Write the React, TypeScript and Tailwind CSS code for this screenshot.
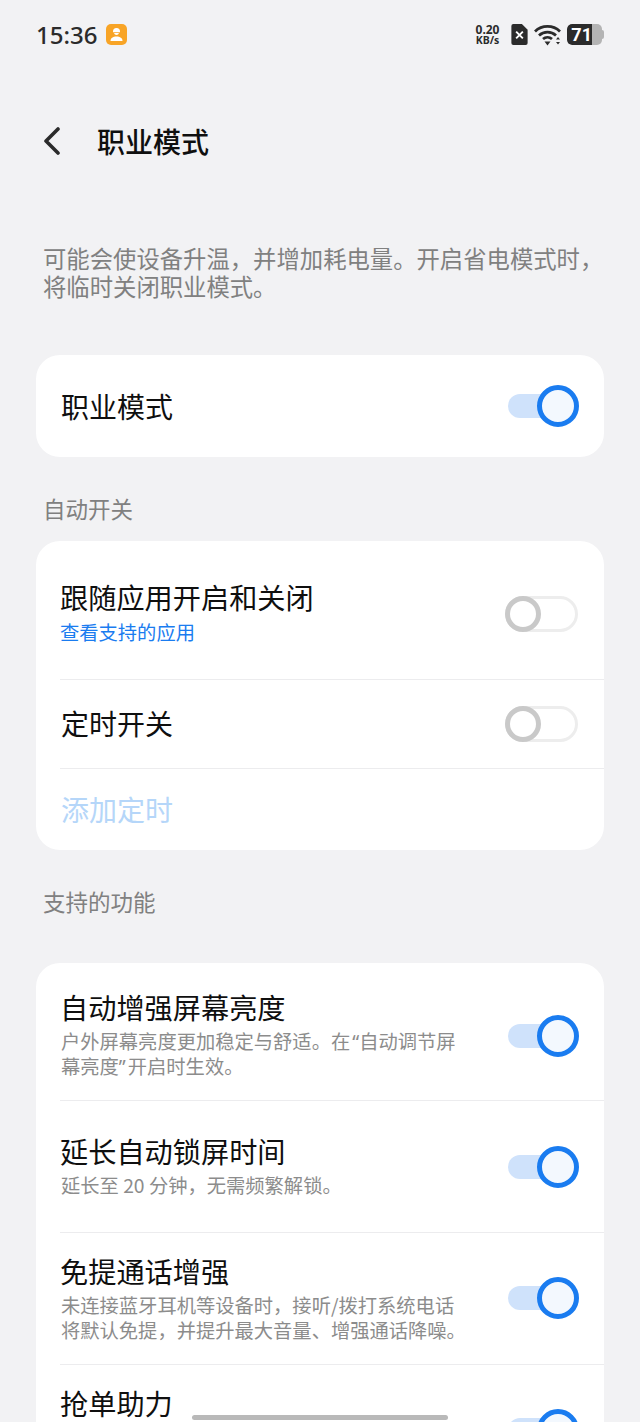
import type { ReactNode } from "react";

const font = { fontFamily: '"Noto Sans CJK SC", "Noto Sans", sans-serif' };
const latin = { fontFamily: '"Noto Sans", sans-serif' };

function ToggleOn() {
  return (
    <div className="relative h-[42px] w-[72px] shrink-0">
      <div className="absolute left-[1px] top-[9px] h-[24px] w-[50px] rounded-full bg-[#cfe2fb]" />
      <div className="absolute right-0 top-0 h-[42px] w-[42px] rounded-full border-[5px] border-[#1a7cf0] bg-[#f3f8fe]" />
    </div>
  );
}

function ToggleOff() {
  return (
    <div className="relative h-[36px] w-[73px] shrink-0">
      <div className="absolute inset-0 rounded-full border-[3px] border-[#ededed]" />
      <div className="absolute left-0 top-0 h-[36px] w-[36px] rounded-full border-[5px] border-[#c9c9c9] bg-white" />
    </div>
  );
}

function Divider() {
  return <div className="ml-[24px] h-[1px] bg-[#ececee]" />;
}

function FeatureRow({ title, lines, rowClass, toggleClass }: { title: string; lines: ReactNode[]; rowClass: string; toggleClass: string }) {
  return (
    <div className={`flex items-start justify-between pl-[25px] pr-[25px] ${rowClass}`}>
      <div>
        <div className="-ml-[1px] text-[28.2px] leading-[36px] text-[#0f0f0f]">{title}</div>
        <div className="mt-[4px] text-[19.3px] leading-[25px] text-[#8c8c8c]">
          {lines.map((l, i) => (
            <div key={i}>{l}</div>
          ))}
        </div>
      </div>
      <div className={toggleClass}>
        <ToggleOn />
      </div>
    </div>
  );
}

export default function App() {
  return (
    <div style={font} className="relative h-[1422px] w-[640px] overflow-hidden bg-[#f2f2f4]">
      {/* status bar */}
      <div className="flex h-[70px] items-start justify-between pl-[36px] pr-[36px] pt-[24px]">
        <div className="flex items-center gap-[9px]">
          <span style={latin} className="text-[24px] font-medium leading-[21px] text-[#2b2b2b]">
            15:36
          </span>
          <div className="flex h-[21px] w-[21px] items-center justify-center rounded-[5px] bg-[#f8a426]">
            <svg width="15" height="15" viewBox="0 0 15 15" fill="#fff">
              <path d="M4 4.6a3.5 3.5 0 0 1 7 0v.6H4z" />
              <path d="M5 6h5a2.6 2.6 0 0 1-5 0z" />
              <path d="M1.5 14c0-3 2.4-4.6 6-4.6s6 1.6 6 4.6z" />
            </svg>
          </div>
        </div>
        <div className="flex items-start">
          <div style={latin} className="mr-[10px] w-[27px] text-center text-[10.5px] font-bold leading-[11px] text-[#2b2b2b]">
            <div className="text-[12px]">0.20</div>
            <div>KB/s</div>
          </div>
          <svg width="17" height="21" viewBox="0 0 17 22" className="mr-[6px]">
            <path d="M2 0h9l6 6v14a2 2 0 0 1-2 2H2a2 2 0 0 1-2-2V2a2 2 0 0 1 2-2z" fill="#2b2b2b" />
            <path d="M5 8l7 7M12 8l-7 7" stroke="#fff" strokeWidth="2" />
          </svg>
          <svg width="28" height="22" viewBox="0 0 28 22" fill="none" stroke="#2b2b2b" strokeWidth="2.8" className="mr-[5px]">
            <path d="M1 7.5a18 18 0 0 1 25 0" />
            <path d="M5 11.5a12.5 12.5 0 0 1 17 0" />
            <path d="M9 15a7 7 0 0 1 9 0" />
            <path d="M10.5 17.5h6l-3 4z" fill="#2b2b2b" stroke="none" />
            <path d="M22 15.5l2-2.5 2 2.5zM22 18l2 2.5 2-2.5z" fill="#2b2b2b" stroke="none" />
          </svg>
          <div className="flex h-[21px] w-[37px] items-center">
            <div className="flex h-[21px] w-[35px] overflow-hidden rounded-[5px] bg-[#b4b4b4]">
              <div style={{ fontFamily: "Roboto, sans-serif" }} className="flex h-full w-[25px] items-center justify-end rounded-l-[5px] bg-[#2b2b2b] text-[18px] font-bold leading-none text-white">
                71
              </div>
            </div>
            <div className="h-[9px] w-[2px] rounded-r-[2px] bg-[#b4b4b4]" />
          </div>
        </div>
      </div>

      {/* header */}
      <div className="flex h-[68px] items-center pl-[43px] pt-[71px]">
        <svg width="17" height="28" viewBox="0 0 17 28" fill="none" stroke="#2b2b2b" strokeWidth="3.6" strokeLinecap="round" strokeLinejoin="round">
          <path d="M15 2L3 14l12 12" />
        </svg>
        <div className="ml-[37px] text-[28px] font-medium leading-[36px] text-[#0f0f0f]">职业模式</div>
      </div>

      {/* description */}
      <div className="mt-[70px] pl-[43px] pt-[33px] text-[23.35px] leading-[28px] text-[#808080]">
        <div>可能会使设备升温，并增加耗电量。开启省电模式时，</div>
        <div>将临时关闭职业模式。</div>
      </div>

      {/* main switch */}
      <div className="mx-[36px] mt-[55px] flex h-[102px] items-center justify-between rounded-[24px] bg-white pl-[25px] pr-[25px]">
        <div className="text-[28px] leading-[36px] text-[#0f0f0f]">职业模式</div>
        <ToggleOn />
      </div>

      <div className="mt-[36px] pl-[43px] text-[22.5px] leading-[30px] text-[#808080]">自动开关</div>

      <div className="mx-[36px] mt-[18px] h-[309px] rounded-[24px] bg-white">
        <div className="flex h-[138px] items-start justify-between pl-[24px] pr-[26px] pt-[38px]">
          <div>
            <div className="text-[28.2px] leading-[36px] text-[#0f0f0f]">跟随应用开启和关闭</div>
            <div className="mt-[5px] text-[19.3px] leading-[25px] text-[#1a7cf0]">查看支持的应用</div>
          </div>
          <div className="mt-[17px]">
            <ToggleOff />
          </div>
        </div>
        <Divider />
        <div className="flex h-[88px] items-center justify-between pl-[25px] pr-[26px]">
          <div className="pb-[2px] text-[28px] leading-[36px] text-[#0f0f0f]">定时开关</div>
          <ToggleOff />
        </div>
        <Divider />
        <div className="flex h-[81px] items-center pb-[2px] pl-[25px] text-[28px] leading-[36px] text-[#b5d6f9]">添加定时</div>
      </div>

      <div className="mt-[36px] pl-[43px] text-[22.5px] leading-[30px] text-[#808080]">支持的功能</div>

      <div className="mx-[36px] mt-[47px] rounded-[24px] bg-white">
        <FeatureRow
          title="自动增强屏幕亮度"
          lines={[
            <>
              户外屏幕亮度更加稳定与舒适。在<span style={latin} className="ml-[2px]">“</span>自动调节屏
            </>,
            <>
              幕亮度<span style={latin}>”</span>
              <span className="ml-[2px]">开启时生效。</span>
            </>,
          ]}
          rowClass="h-[137px] pt-[26px]"
          toggleClass="mt-[26px]"
        />
        <Divider />
        <FeatureRow title="延长自动锁屏时间" lines={["延长至 20 分钟，无需频繁解锁。"]} rowClass="h-[131px] pt-[32px]" toggleClass="mt-[13px]" />
        <Divider />
        <FeatureRow title="免提通话增强" lines={["未连接蓝牙耳机等设备时，接听/拨打系统电话", "将默认免提，并提升最大音量、增强通话降噪。"]} rowClass="h-[131px] pt-[20px]" toggleClass="mt-[24px]" />
        <Divider />
        <FeatureRow title="抢单助力" lines={[]} rowClass="h-[131px] pt-[20px]" toggleClass="mt-[24px]" />
      </div>

      {/* home indicator */}
      <div className="absolute bottom-[2px] left-[192px] h-[5px] w-[256px] rounded-full bg-[#b9b9b9]" />
    </div>
  );
}
